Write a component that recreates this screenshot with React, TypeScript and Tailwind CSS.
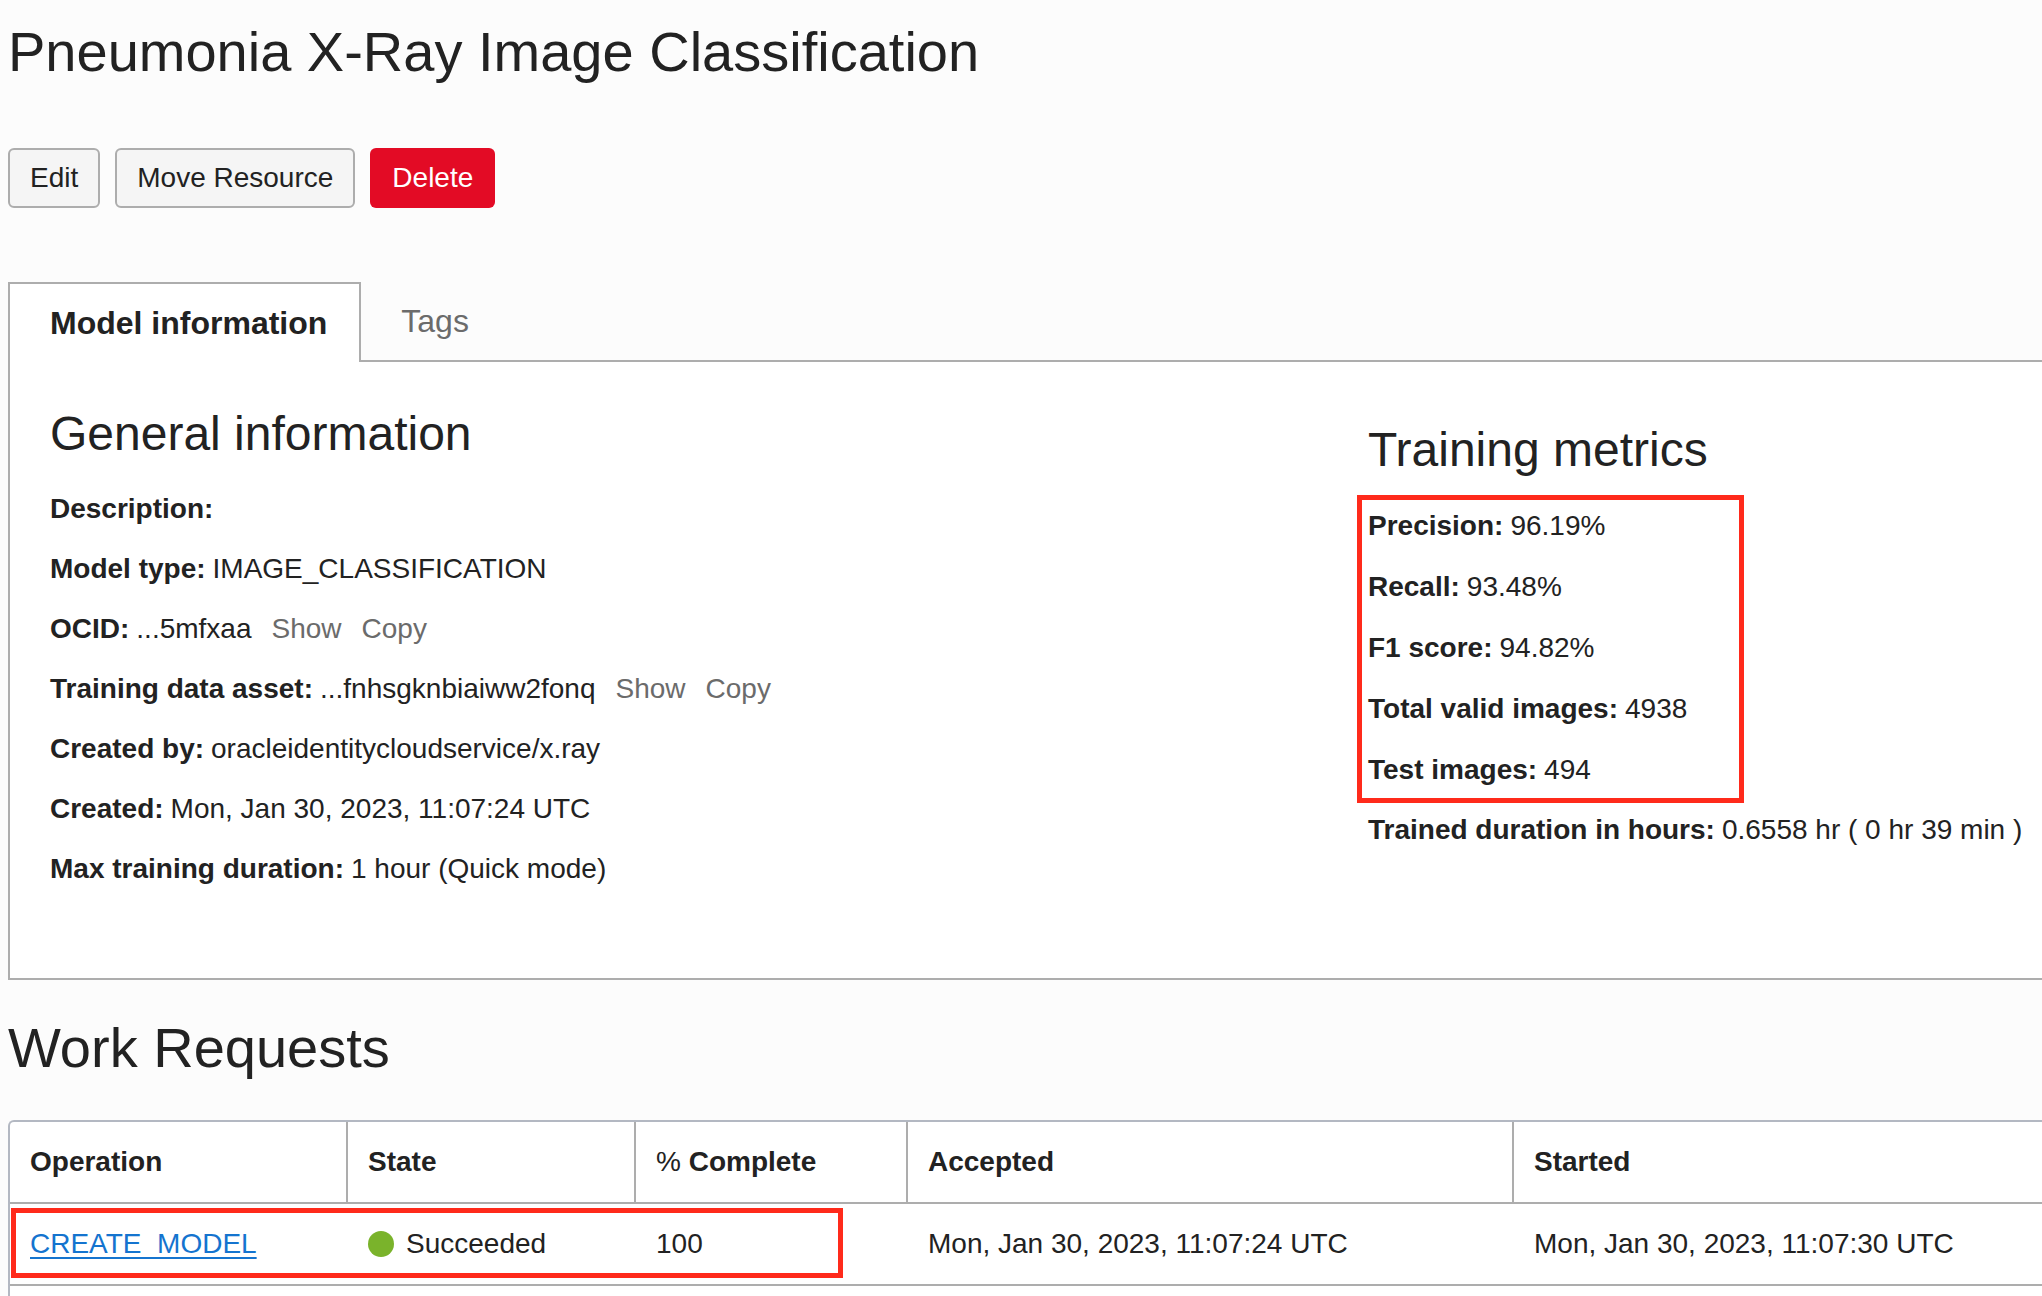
import type { ReactNode } from "react";

const metrics = [
  { label: "Precision", value: "96.19%" },
  { label: "Recall", value: "93.48%" },
  { label: "F1 score", value: "94.82%" },
  { label: "Total valid images", value: "4938" },
  { label: "Test images", value: "494" },
];

function Field({
  label,
  height = "h-15",
  children,
}: {
  label: string;
  height?: string;
  children?: ReactNode;
}) {
  return (
    <div className={`flex items-center gap-[7px] whitespace-nowrap ${height}`}>
      <dt className="font-bold">{label}:</dt>
      <dd className="flex gap-5">{children}</dd>
    </div>
  );
}

function IdActions() {
  return (
    <>
      <button type="button" className="text-[#6b6b6b]">Show</button>
      <button type="button" className="text-[#6b6b6b]">Copy</button>
    </>
  );
}

function Th({ children, className = "" }: { children: ReactNode; className?: string }) {
  return (
    <th scope="col" className={`border-b-2 border-[#adadad] px-5 text-left font-bold ${className}`}>
      {children}
    </th>
  );
}

export default function App() {
  return (
    <main className="flex min-h-screen flex-col overflow-hidden bg-[#fcfcfc] pl-2 font-['Liberation_Sans',Arial,sans-serif] text-[28px] leading-9 text-[#222]">
      <h1 className="pt-4 text-[56px] leading-[72px]">Pneumonia X-Ray Image Classification</h1>

      <div className="mt-15 flex gap-[15px]">
        <button type="button" className="h-15 rounded-md border-2 border-[#adadad] bg-[#f5f5f5] px-5">Edit</button>
        <button type="button" className="h-15 rounded-md border-2 border-[#adadad] bg-[#f5f5f5] px-5">Move Resource</button>
        <button type="button" className="h-15 rounded-md bg-[#e30b25] px-5.5 text-white">Delete</button>
      </div>

      <div role="tablist" className="mt-[74px] flex text-[32px]">
        <button
          type="button"
          role="tab"
          aria-selected="true"
          className="relative z-10 -mb-0.5 h-20 border-2 border-b-0 border-[#adadad] bg-white pr-8 pl-10 font-bold"
        >
          Model information
        </button>
        <button type="button" role="tab" aria-selected="false" className="px-10 text-[#6b6b6b]">Tags</button>
      </div>

      <section className="grid grid-cols-[1318fr_674fr] border-2 border-r-0 border-[#adadad] bg-white pt-[42px] pb-[79px] pl-10">
        <div>
          <h2 className="mb-[15px] text-[48px] leading-15">General information</h2>
          <dl>
            <Field label="Description" />
            <Field label="Model type">IMAGE_CLASSIFICATION</Field>
            <Field label="OCID">...5mfxaa<IdActions /></Field>
            <Field label="Training data asset">...fnhsgknbiaiww2fonq<IdActions /></Field>
            <Field label="Created by">oracleidentitycloudservice/x.ray</Field>
            <Field label="Created">Mon, Jan 30, 2023, 11:07:24 UTC</Field>
            <Field label="Max training duration">1 hour (Quick mode)</Field>
          </dl>
        </div>
        <div className="pt-4">
          <h2 className="mb-[15px] text-[48px] leading-15">Training metrics</h2>
          <div className="relative">
            <dl>
              {metrics.map((m) => (
                <Field key={m.label} label={m.label} height="h-[61px]">{m.value}</Field>
              ))}
            </dl>
            <div className="pointer-events-none absolute top-0 -left-[11px] h-[308px] w-[387px] border-[5px] border-[#ff2a1b]" />
          </div>
          <dl>
            <Field label="Trained duration in hours">0.6558 hr ( 0 hr 39 min )</Field>
          </dl>
        </div>
      </section>

      <h2 className="mt-8 text-[56px] leading-[72px]">Work Requests</h2>

      <div className="relative mt-9 grow rounded-tl-md border-t-2 border-l-2 border-[#b3b8c2] bg-white">
        <table className="w-full table-fixed border-separate border-spacing-0">
          <thead>
            <tr className="h-[82px]">
              <Th className="w-[338px] border-r-2">Operation</Th>
              <Th className="w-[288px] border-r-2">State</Th>
              <Th className="w-[272px] border-r-2"><span className="font-normal">%</span> Complete</Th>
              <Th className="w-[606px] border-r-2">Accepted</Th>
              <Th>Started</Th>
            </tr>
          </thead>
          <tbody>
            <tr className="h-[82px] *:border-b-2 *:border-[#adadad] *:px-5">
              <td>
                <a href="#create-model" className="text-[#1474cf] underline decoration-2 underline-offset-4">CREATE_MODEL</a>
              </td>
              <td>
                <span className="flex items-center gap-3">
                  <span className="size-[26px] rounded-full bg-[#7ab32b]" />
                  Succeeded
                </span>
              </td>
              <td>100</td>
              <td>Mon, Jan 30, 2023, 11:07:24 UTC</td>
              <td>Mon, Jan 30, 2023, 11:07:30 UTC</td>
            </tr>
          </tbody>
        </table>
        <div className="pointer-events-none absolute top-[86px] left-px h-[70px] w-[832px] border-[5px] border-[#ff2a1b]" />
      </div>
    </main>
  );
}
